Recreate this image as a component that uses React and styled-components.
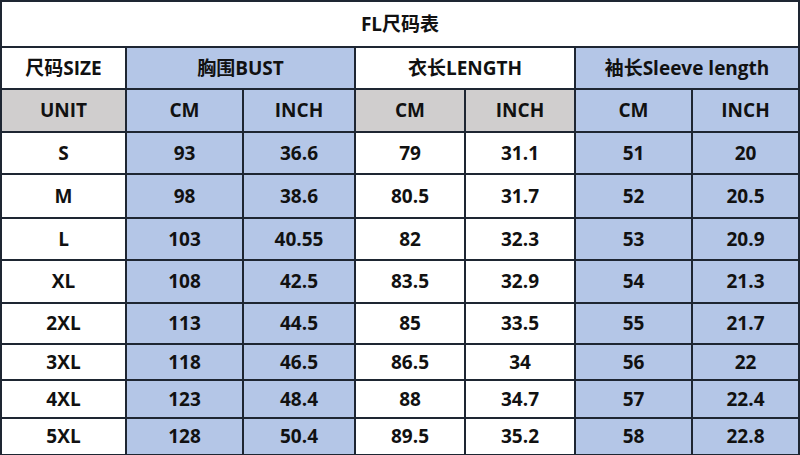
import React from "react";
import styled, { createGlobalStyle } from "styled-components";

const GlobalStyle = createGlobalStyle`
  html, body {
    margin: 0;
    padding: 0;
    background: #ffffff;
  }
  body {
    font-family: "Open Sans", "Noto Sans CJK SC", sans-serif;
  }
`;

const widths = [125, 117, 112, 110, 110, 117, 107];
const dataHeights = [42, 44, 42, 43, 41, 36, 38, 37];

const rows = [
  ["S", "93", "36.6", "79", "31.1", "51", "20"],
  ["M", "98", "38.6", "80.5", "31.7", "52", "20.5"],
  ["L", "103", "40.55", "82", "32.3", "53", "20.9"],
  ["XL", "108", "42.5", "83.5", "32.9", "54", "21.3"],
  ["2XL", "113", "44.5", "85", "33.5", "55", "21.7"],
  ["3XL", "118", "46.5", "86.5", "34", "56", "22"],
  ["4XL", "123", "48.4", "88", "34.7", "57", "22.4"],
  ["5XL", "128", "50.4", "89.5", "35.2", "58", "22.8"],
];

const bg = { white: "#ffffff", blue: "#b4c6e7", gray: "#d0cece" };
const dataTones = ["white", "blue", "blue", "white", "white", "blue", "blue"];
const unitTones = ["gray", "blue", "blue", "gray", "gray", "blue", "blue"];

const Table = styled.table`
  border-collapse: collapse;
  table-layout: fixed;
  width: 798px;
  color: #111111;
`;

const Row = styled.tr`
  height: ${(p) => p.$h}px;
`;

const Cell = styled.td`
  border: 2px solid #1e2632;
  background: ${(p) => bg[p.$tone || "white"]};
  text-align: center;
  vertical-align: middle;
  padding: 0;
  font-size: 19px;
  font-weight: 700;
  line-height: 1;
  white-space: nowrap;
`;

const Title = styled(Cell)`
  padding-top: 1px;
`;

export default function App() {
  return (
    <>
      <GlobalStyle />
      <Table>
        <colgroup>
          {widths.map((w, i) => (
            <col key={i} style={{ width: w }} />
          ))}
        </colgroup>
        <tbody>
          <Row $h={46}>
            <Title colSpan={7}>FL尺码表</Title>
          </Row>
          <Row $h={42}>
            <Cell>尺码SIZE</Cell>
            <Cell colSpan={2} $tone="blue">胸围BUST</Cell>
            <Cell colSpan={2}>衣长LENGTH</Cell>
            <Cell colSpan={2} $tone="blue">袖长Sleeve length</Cell>
          </Row>
          <Row $h={43}>
            {["UNIT", "CM", "INCH", "CM", "INCH", "CM", "INCH"].map((t, i) => (
              <Cell key={i} $tone={unitTones[i]}>{t}</Cell>
            ))}
          </Row>
          {rows.map((r, ri) => (
            <Row key={ri} $h={dataHeights[ri]}>
              {r.map((v, ci) => (
                <Cell key={ci} $tone={dataTones[ci]}>{v}</Cell>
              ))}
            </Row>
          ))}
        </tbody>
      </Table>
    </>
  );
}
